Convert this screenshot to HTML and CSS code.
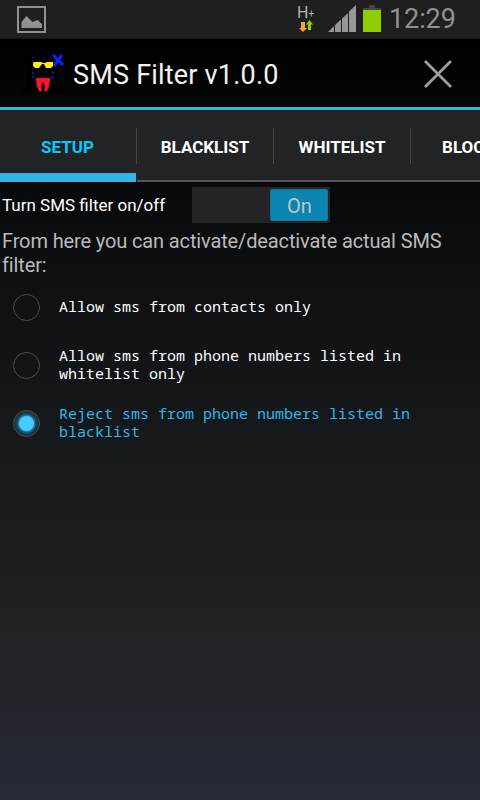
FILE: index.html
```html
<!DOCTYPE html>
<html lang="en">
<head>
<meta charset="utf-8">
<title>SMS Filter</title>
<link rel="stylesheet" href="styles.css">
</head>
<body>
<div class="statusbar">
  <svg class="gallery" width="29" height="27" viewBox="0 0 29 27"><rect x="1" y="1" width="27" height="25" fill="none" stroke="#919191" stroke-width="2"/><path d="M4.500 22v-6l5-6 6 6 5-2 4.500 4v4z" fill="#919191"/></svg>
  <div class="network">
    <div class="hplus">H<span>+</span></div>
    <svg width="14" height="13" viewBox="0 0 14 13"><path d="M2 2h4v6h2l-4 4-4-4h2z" fill="#ffa033"/><path d="M10.500 0l3.500 4.500h-2V10H9V4.500H7z" fill="#8fce00"/></svg>
  </div>
  <svg class="signal" width="28" height="27" viewBox="0 0 28 27"><path d="M0 27l6-6v6zM7 27v-7l6-5.500v12.500zM14 27V13.500L20 8v19zM21 27V6.500L28 0v27z" fill="#969696"/></svg>
  <svg class="battery" width="18" height="27" viewBox="0 0 18 27"><path d="M6 0h6v3h6v2H0V3h6z" fill="#464646"/><path d="M0 5h18v22H0z" fill="#8fce00"/></svg>
  <div class="clock">12:29</div>
</div>
<header class="appbar">
  <svg class="logo" width="44" height="44" viewBox="0 0 44 44"><path d="M5 1h33v30l5 11H0l5-11z" fill="#000"/><path d="M11 11h8l2 1h2l2-1h6v4l-2 2h-5l-2-4h-2l-3 4h-4l-2-2z" fill="#fff200"/><path d="M31 4l10 10M40 4l-8 11" stroke="#1020ff" stroke-width="3"/><path d="M11 6v1M11 11v1M11 21v2M11 25v2M30 21.500h2M29 26.500h3" stroke="#1020ee" stroke-width="1.500"/><path d="M14 27h14c0 5-1 9-3 13h-3l1-5-2-4-2 4 1 5h-3c-2-4-3-8-3-13z" fill="#ff1230"/></svg>
  <h1>SMS Filter v1.0.0</h1>
  <svg class="close" width="28" height="28" viewBox="0 0 28 28"><path d="M1 1l26 26M27 1L1 27" stroke="#a0a0a0" stroke-width="2.700"/></svg>
</header>
<nav class="tabs">
  <div class="tab active"><span>SETUP</span></div>
  <div class="tab"><span>BLACKLIST</span></div>
  <div class="tab"><span>WHITELIST</span></div>
  <div class="tab"><span>BLOCKED</span></div>
</nav>
<main>
  <div class="setting"><span class="label">Turn SMS filter on/off</span><div class="switch"><div class="thumb">On</div></div></div>
  <p class="intro">From here you can activate/deactivate actual SMS filter:</p>
  <div class="option"><i class="radio"></i><span>Allow sms from contacts only</span></div>
  <div class="option"><i class="radio"></i><span>Allow sms from phone numbers listed in whitelist only</span></div>
  <div class="option checked"><i class="radio"></i><span>Reject sms from phone numbers listed in blacklist</span></div>
</main>
</body>
</html>
```
FILE: styles.css
```css
* { box-sizing: border-box; }
body {
  margin: 0;
  width: 480px;
  height: 800px;
  overflow: hidden;
  color: #fff;
  font-family: Roboto, "Liberation Sans", sans-serif;
  background: linear-gradient(#000 0, #08090b 180px, #171a1d 450px, #202226 640px, #272b34 800px);
}
svg { display: block; flex: none; }
.statusbar {
  display: flex;
  align-items: flex-start;
  height: 39px;
  padding: 5px 0 0 17px;
  background: #1f1f1f;
  border-bottom: 1px solid #141414;
}
.gallery { margin-top: 1px; }
.network { width: 20px; margin-left: 251px; }
.network svg { margin-left: 2px; }
.hplus {
  height: 15px;
  font-size: 16px;
  line-height: 16px;
  color: #b4b4b4;
  white-space: nowrap;
}
.hplus span { font-size: 10px; vertical-align: 1px; }
.signal { margin-left: 11px; }
.battery { margin-left: 7px; }
.clock {
  margin-left: 8px;
  font-size: 27px;
  line-height: 28px;
  letter-spacing: -0.1px;
  color: #919191;
}
.appbar {
  display: flex;
  align-items: center;
  height: 71px;
  padding: 0 28px 0 22px;
  border-bottom: 3px solid #33b5e5;
  background: linear-gradient(#000, #050606);
}
.appbar h1 {
  flex: 1;
  margin: 4px 0 0 7px;
  font-size: 27px;
  font-weight: 400;
  line-height: 32px;
  letter-spacing: 0.2px;
  color: #f3f3f3;
}
.close { margin-top: 2px; }
.tabs {
  display: flex;
  width: 480px;
  height: 72px;
  overflow: hidden;
  background: #222325;
}
.tab {
  flex: 0 0 137px;
  display: flex;
  align-items: center;
  padding-top: 2px;
  border-bottom: 2px solid #55565a;
  font-size: 17px;
  font-weight: 700;
}
.tab span {
  flex: 1;
  height: 36px;
  line-height: 38px;
  text-align: center;
  border-right: 1px solid #454648;
}
.tab.active {
  color: #0cf;
  background: linear-gradient(#33b5e5, #33b5e5) 0 100% / 136px 9px no-repeat border-box;
  border-bottom-color: transparent;
}
.tab.active span { padding-right: 1px; }
.setting { display: flex; height: 46px; padding: 5px 0 0 2px; }
.label { width: 190px; font-size: 17px; line-height: 37px; }
.switch {
  display: flex;
  justify-content: flex-end;
  width: 138px;
  height: 36px;
  padding: 2px;
  background: #242424;
}
.thumb {
  width: 58px;
  height: 32px;
  border: 1px solid #15749a;
  border-radius: 2px;
  background: #0985b0;
  font-size: 20px;
  line-height: 32px;
  text-align: center;
  text-indent: 1px;
  color: #bfc6c9;
}
.intro {
  margin: 1px 0 0 2px;
  font-size: 20px;
  line-height: 24px;
  letter-spacing: -0.13px;
  color: #bababa;
}
.option {
  display: flex;
  align-items: center;
  height: 58px;
  padding-left: 12px;
  font: 15px/18px "Droid Sans Mono", "Noto Sans Mono", "DejaVu Sans Mono", monospace;
}
.option span { width: 380px; margin-left: 19px; }
.option.checked { color: #33b5e5; }
.radio {
  flex: none;
  width: 27px;
  height: 27px;
  margin: 2px 0 0 1px;
  border: 1.500px solid #4d4f51;
  border-radius: 50%;
}
.option .radio + span { margin-left: 19px; }
.checked .radio {
  background: radial-gradient(circle, #4cf 0 7px, #24799b 8px, #174052 10px, #20292e 13px);
}
```
